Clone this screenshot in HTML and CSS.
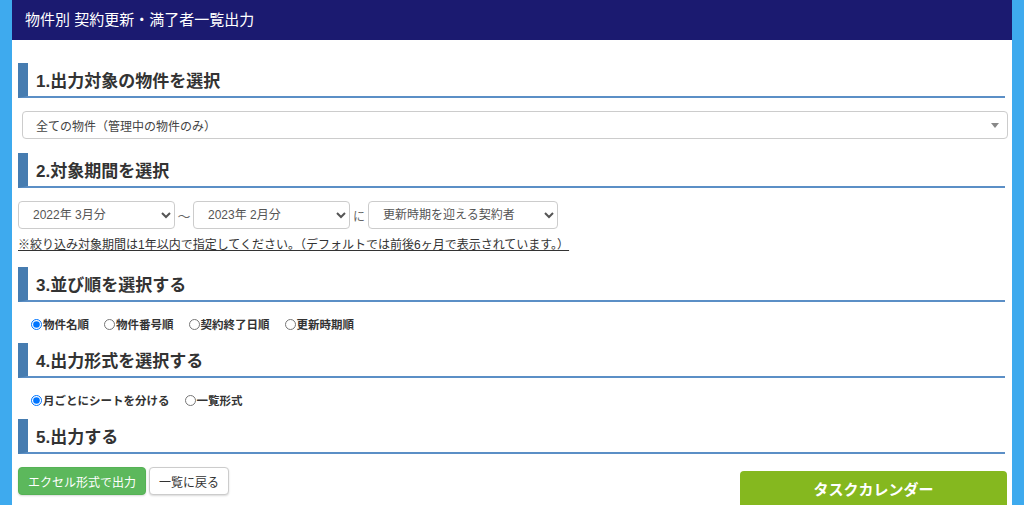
FILE: index.html
```html
<!DOCTYPE html>
<html lang="ja">
<head>
  <meta charset="UTF-8" />
  <meta name="viewport" content="width=device-width, initial-scale=1.0"/>
  <title>物件別 契約更新・満了者一覧出力</title>
  <link rel="stylesheet" href="styles.css">
</head>
<body>
  <div class="page">
    <div class="topbar">物件別 契約更新・満了者一覧出力</div>

    <div class="content">
      <h2 class="sec-title">1.出力対象の物件を選択</h2>
      <div class="fake-select">
        <span>全ての物件（管理中の物件のみ）</span>
        <span class="caret"></span>
      </div>

      <h2 class="sec-title">2.対象期間を選択</h2>
      <div class="period">
        <select class="sel sel-month">
          <option>2022年 3月分</option>
        </select>
        <span class="sep">～</span>
        <select class="sel sel-month">
          <option>2023年 2月分</option>
        </select>
        <span class="sep sep-ni">に</span>
        <select class="sel sel-type">
          <option>更新時期を迎える契約者</option>
        </select>
      </div>
      <p class="note">※絞り込み対象期間は1年以内で指定してください。（デフォルトでは前後6ヶ月で表示されています。）</p>

      <h2 class="sec-title">3.並び順を選択する</h2>
      <div class="radios">
        <label><input type="radio" name="sort" checked>物件名順</label>
        <label><input type="radio" name="sort">物件番号順</label>
        <label><input type="radio" name="sort">契約終了日順</label>
        <label><input type="radio" name="sort">更新時期順</label>
      </div>

      <h2 class="sec-title">4.出力形式を選択する</h2>
      <div class="radios">
        <label><input type="radio" name="format" checked>月ごとにシートを分ける</label>
        <label><input type="radio" name="format">一覧形式</label>
      </div>

      <h2 class="sec-title">5.出力する</h2>
      <div class="actions">
        <div class="btn-group">
          <button class="btn btn-green">エクセル形式で出力</button>
          <button class="btn btn-white">一覧に戻る</button>
        </div>
        <button class="btn-calendar">タスクカレンダー</button>
      </div>
    </div>
  </div>
</body>
</html>
```

FILE: styles.css
```css
html, body {
  height: 100%;
}

body {
  margin: 0;
  background-color: #3eaaee;
  font-family: "Liberation Sans", "Noto Sans CJK JP", sans-serif;
  color: #333;
  overflow: hidden;
}

.page {
  margin: 0 12px;
  min-height: 100%;
  background: #fff;
}

.topbar {
  height: 40px;
  line-height: 40px;
  padding-left: 13px;
  background-color: #1b1a70;
  color: #fff;
  font-size: 15px;
}

.content {
  padding: 23px 7px 0 6px;
}

.sec-title {
  display: flex;
  align-items: center;
  height: 33px;
  margin: 0 0 13px;
  padding-left: 8px;
  border-left: 10px solid #467cb0;
  border-bottom: 2px solid #5b8fc6;
  font-size: 17px;
  font-weight: bold;
  color: #333;
}

.fake-select {
  display: flex;
  align-items: center;
  justify-content: space-between;
  height: 28px;
  box-sizing: border-box;
  margin: 0 -3px 14px 4px;
  padding: 0 8px 0 13px;
  border: 1px solid #ccc;
  border-radius: 4px;
  font-size: 12px;
  color: #444;
}

.caret {
  width: 0;
  height: 0;
  border-left: 4px solid transparent;
  border-right: 4px solid transparent;
  border-top: 5px solid #888;
}

.period {
  display: flex;
  align-items: center;
}

.sel {
  height: 28px;
  padding: 0 6px 0 10px;
  border: 1px solid #ccc;
  border-radius: 4px;
  background: #fff;
  font-family: inherit;
  font-size: 12px;
  color: #555;
}

.sel-month {
  width: 157px;
}

.sel-type {
  width: 190px;
}

.sep {
  width: 18px;
  text-align: center;
  font-size: 13px;
  color: #666;
}

.sep-ni {
  width: 18px;
  font-size: 12px;
}

.note {
  margin: 8px 0 14px;
  line-height: 16px;
  font-size: 12px;
  color: #333;
  text-decoration: underline;
}

.radios {
  display: flex;
  align-items: center;
  height: 18px;
  margin-bottom: 10px;
  padding-left: 13px;
}

.radios label {
  display: flex;
  align-items: center;
  margin-right: 15px;
  font-size: 11.5px;
  font-weight: bold;
  color: #333;
}

.radios input {
  width: 11px;
  height: 11px;
  margin: 0 1px 0 0;
}

.actions {
  display: flex;
  justify-content: space-between;
  align-items: flex-start;
}

.btn-group {
  display: flex;
  gap: 3px;
}

.btn {
  height: 28px;
  padding: 0 9px;
  border-radius: 4px;
  font-family: inherit;
  font-size: 12px;
  box-shadow: 0 1px 2px rgba(0, 0, 0, 0.15);
}

.btn-green {
  border: 1px solid #55b255;
  background-color: #5cb85c;
  color: #fff;
}

.btn-white {
  border: 1px solid #ccc;
  background-color: #fff;
  color: #333;
}

.btn-calendar {
  width: 267px;
  height: 40px;
  margin: 4px -2px 0 0;
  border: none;
  border-radius: 4px 4px 0 0;
  background-color: #85b81f;
  color: #fff;
  font-family: inherit;
  font-size: 15px;
  font-weight: bold;
  align-self: flex-start;
  padding-bottom: 6px;
}
```
